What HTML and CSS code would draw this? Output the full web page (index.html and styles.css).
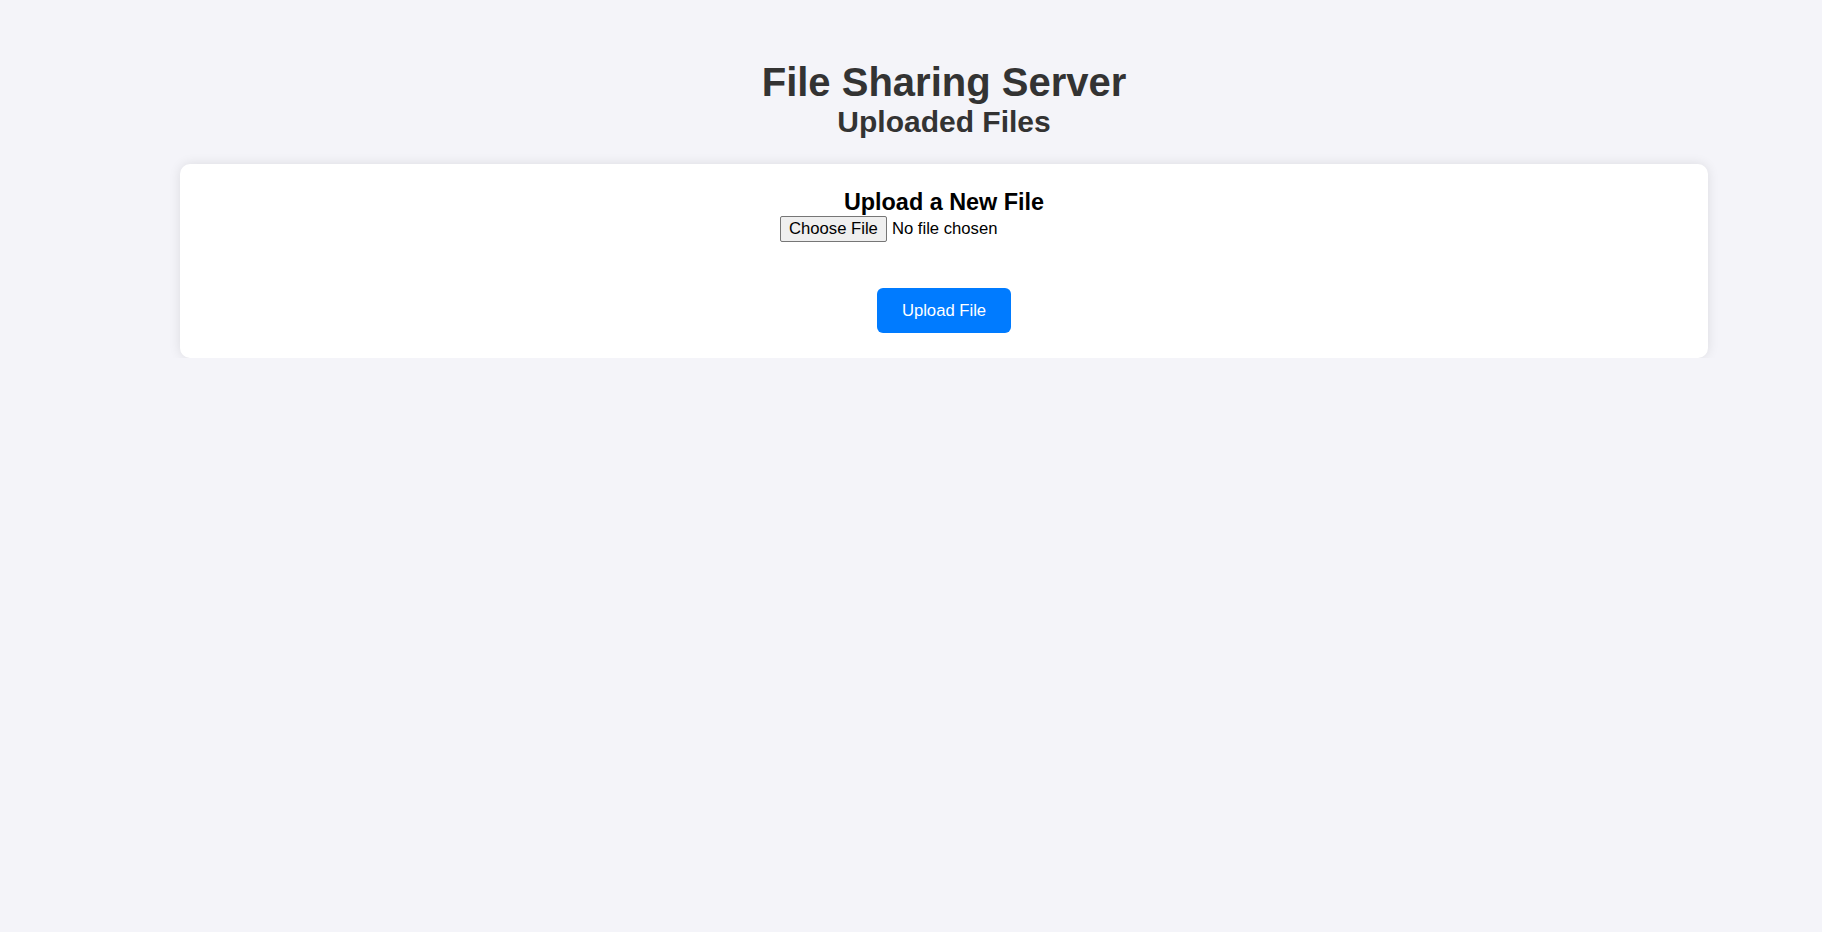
FILE: index.html
```html
<!DOCTYPE html>
<html lang="en">
<head>
<meta charset="utf-8">
<title>File Sharing Server</title>
<link rel="stylesheet" href="styles.css">
</head>
<body>
<div class="page">
  <header class="header">
    <h1 class="title">File Sharing Server</h1>
    <h2 class="subtitle">Uploaded Files</h2>
  </header>
  <section class="card">
    <h3 class="card-title">Upload a New File</h3>
    <form class="upload-form" onsubmit="return false;">
      <input class="file-input" type="file" name="file">
      <button class="upload-btn" type="submit">Upload File</button>
    </form>
  </section>
</div>
</body>
</html>
```

FILE: styles.css
```css
html, body {
  margin: 0;
  padding: 0;
}
body {
  background: #f4f4f9;
  font-family: "Liberation Sans", Arial, sans-serif;
  color: #333;
}
.page {
  padding: 60px 114px 0 180px;
}
.header {
  text-align: center;
}
.title {
  margin: 0;
  font-size: 40px;
  line-height: 44px;
  font-weight: bold;
  color: #333;
}
.subtitle {
  margin: 2px 0 0;
  font-size: 30px;
  line-height: 32px;
  font-weight: bold;
  color: #333;
}
.card {
  margin-top: 26px;
  background: #fff;
  border-radius: 10px;
  box-shadow: 0 0 12px rgba(0, 0, 0, 0.1);
  padding: 25px 25px 25px;
  text-align: center;
}
.card-title {
  margin: 0;
  font-size: 23.4px;
  line-height: 27px;
  font-weight: bold;
  color: #000;
}
.upload-form {
  display: flex;
  flex-direction: column;
  align-items: center;
  gap: 46px;
}
.file-input {
  width: 328px;
  height: 26px;
  font-family: "Liberation Sans", Arial, sans-serif;
  font-size: 16.67px;
  color: #000;
  padding: 0;
  margin: 0;
}
.file-input::file-selector-button {
  font-family: "Liberation Sans", Arial, sans-serif;
  font-size: 16.67px;
  height: 26px;
  padding: 0 8px;
  margin: 0 5px 0 0;
  border: 1px solid #767676;
  border-radius: 2px;
  background: #efefef;
  color: #000;
}
.upload-btn {
  font-family: "Liberation Sans", Arial, sans-serif;
  font-size: 16.67px;
  line-height: 19px;
  color: #fff;
  background: #007bff;
  border: none;
  border-radius: 6px;
  padding: 13px 25px 13px;
  white-space: nowrap;
  cursor: pointer;
}
```
